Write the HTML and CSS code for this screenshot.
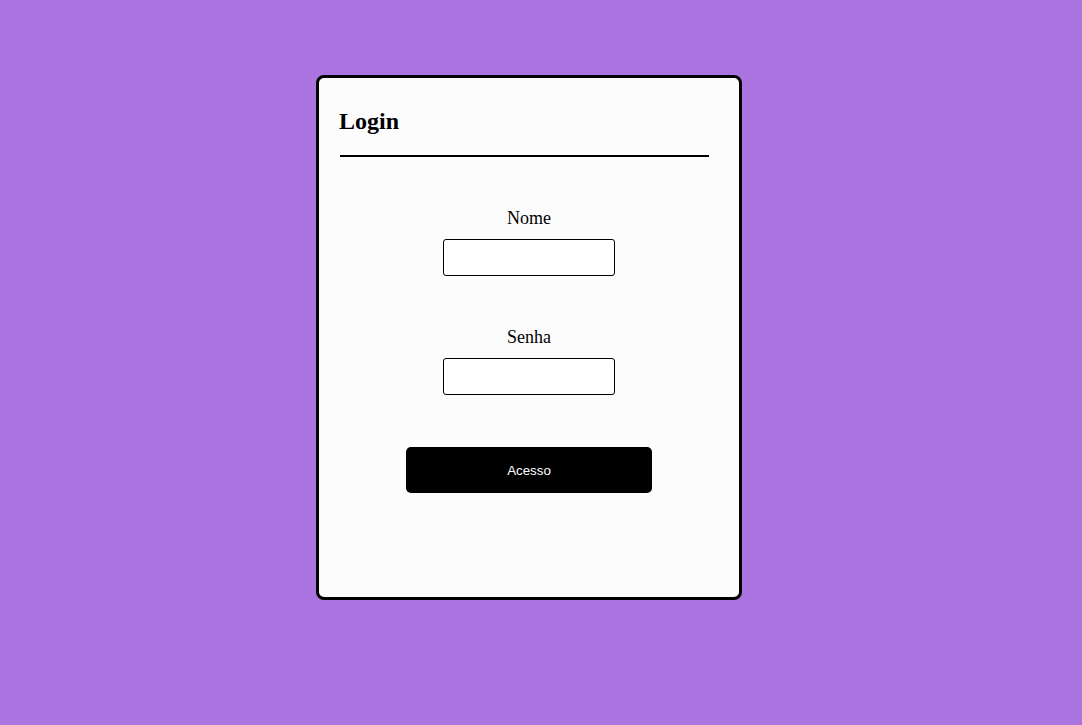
FILE: index.html
```html
<!DOCTYPE html>
<html lang="pt">
<head>
<meta charset="utf-8">
<title>Login</title>
<link rel="stylesheet" href="styles.css">
</head>
<body>
<div class="card">
  <div class="card-header">
    <h2 class="title">Login</h2>
  </div>
  <form class="form">
    <div class="field">
      <label class="label" for="nome">Nome</label>
      <input class="input" id="nome" type="text">
    </div>
    <div class="field">
      <label class="label" for="senha">Senha</label>
      <input class="input" id="senha" type="password">
    </div>
    <button class="button" type="button">Acesso</button>
  </form>
</div>
</body>
</html>
```
FILE: styles.css
```css
html, body {
  margin: 0;
  padding: 0;
}
body {
  background: #ac74e1;
  font-family: "Liberation Serif", "Times New Roman", serif;
  min-height: 725px;
}
.card {
  box-sizing: border-box;
  width: 426px;
  height: 525px;
  margin: 75px 0 0 316px;
  border: 3px solid #000;
  border-radius: 8px;
  background: #fcfcfc;
  padding: 10px 0 0 21px;
}
.card-header {
  width: 369px;
  padding-bottom: 20px;
  border-bottom: 2px solid #000;
}
.title {
  margin: 20px 0 0 -1px;
  font-size: 24px;
  font-weight: bold;
  color: #000;
}
.form {
  display: flex;
  flex-direction: column;
  align-items: center;
  width: 420px;
  margin-left: -21px;
  padding-top: 51px;
  gap: 51px;
}
.field {
  display: flex;
  flex-direction: column;
  align-items: center;
}
.label {
  font-size: 18px;
  color: #000;
  margin-bottom: 10px;
}
.input {
  box-sizing: border-box;
  width: 172px;
  height: 37px;
  border: 1px solid #000;
  border-radius: 3px;
  background: #fff;
  margin: 0;
}
.button {
  width: 246px;
  height: 46px;
  border: none;
  border-radius: 5px;
  background: #000;
  color: #fff;
  font-family: "Liberation Sans", Arial, sans-serif;
  font-size: 13.33px;
  margin-top: 1px;
}
```
